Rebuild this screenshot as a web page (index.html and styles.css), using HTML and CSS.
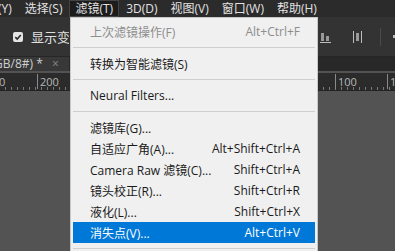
FILE: index.html
```html
<!DOCTYPE html>
<html lang="zh-CN">
<head>
    <meta charset="UTF-8">
    <title>滤镜菜单</title>
    <link rel="stylesheet" href="styles.css">
</head>
<body>
    <div class="app">
        <div class="menubar">
            <span class="menu-item first">(Y)</span>
            <span class="menu-item">选择(S)</span>
            <span class="menu-item active">滤镜(T)</span>
            <span class="menu-item">3D(D)</span>
            <span class="menu-item">视图(V)</span>
            <span class="menu-item">窗口(W)</span>
            <span class="menu-item">帮助(H)</span>
        </div>

        <div class="options">
            <label class="check">
                <span class="box">
                    <svg width="8" height="8" viewBox="0 0 8 8"><path d="M1.3 4.2 L3.2 6 L6.8 2" fill="none" stroke="#2a2a2a" stroke-width="1.6"/></svg>
                </span>
                <span class="check-text">显示变换控件</span>
            </label>
            <div class="align-tools">
                <svg width="14" height="14" viewBox="0 0 14 14">
                    <rect x="2" y="3" width="3" height="8" fill="#9a9a9a"/>
                    <rect x="7" y="6" width="3" height="5" fill="#9a9a9a"/>
                    <rect x="1" y="12" width="11" height="1" fill="#bdbdbd"/>
                </svg>
                <svg width="14" height="14" viewBox="0 0 14 14">
                    <rect x="2" y="1" width="1" height="12" fill="#bdbdbd"/>
                    <rect x="5" y="3" width="3" height="8" fill="#9a9a9a"/>
                    <rect x="10" y="1" width="1" height="12" fill="#bdbdbd"/>
                </svg>
                <span class="vsep"></span>
                <span class="dot"></span>
            </div>
        </div>

        <div class="tabs">
            <div class="tab">GB/8#) * <span class="close">×</span></div>
        </div>

        <div class="ruler">
            <span class="ruler-num" style="left: -4px">0</span>
            <span class="ruler-num" style="left: 37px">200</span>
            <span class="ruler-num" style="left: 335px">100</span>
            <span class="ruler-num" style="left: 387px">1</span>
        </div>

        <div class="canvas"></div>
    </div>

    <div class="dropdown">
        <div class="dd-item disabled"><span>上次滤镜操作(F)</span><span class="key">Alt+Ctrl+F</span></div>
        <div class="dd-sep"></div>
        <div class="dd-item"><span>转换为智能滤镜(S)</span></div>
        <div class="dd-sep"></div>
        <div class="dd-item"><span>Neural Filters...</span></div>
        <div class="dd-sep"></div>
        <div class="dd-item"><span>滤镜库(G)...</span></div>
        <div class="dd-item"><span>自适应广角(A)...</span><span class="key">Alt+Shift+Ctrl+A</span></div>
        <div class="dd-item"><span>Camera Raw 滤镜(C)...</span><span class="key">Shift+Ctrl+A</span></div>
        <div class="dd-item"><span>镜头校正(R)...</span><span class="key">Shift+Ctrl+R</span></div>
        <div class="dd-item"><span>液化(L)...</span><span class="key">Shift+Ctrl+X</span></div>
        <div class="dd-item selected"><span>消失点(V)...</span><span class="key">Alt+Ctrl+V</span></div>
        <div class="dd-sep"></div>
    </div>
</body>
</html>
```

FILE: styles.css
```css
/* General Styles */
body {
    margin: 0;
    padding: 0;
    width: 395px;
    height: 251px;
    overflow: hidden;
    font-family: "Segoe UI", "Open Sans", "Noto Sans CJK SC", sans-serif;
    font-size: 12px;
    background-color: #535353;
    position: relative;
}

.app {
    display: flex;
    flex-direction: column;
    height: 100%;
}

/* Menu bar */
.menubar {
    height: 17px;
    background: #2b2b2b;
    color: #e2e2e2;
    display: flex;
    align-items: center;
    gap: 1px;
    white-space: nowrap;
}

.menu-item {
    padding: 0 6px;
    line-height: 17px;
}

.menu-item.first {
    margin-left: -8px;
}

.menu-item.active {
    background: #1c1c1c;
    box-shadow: inset 0 0 0 1px #444444;
}

/* Options bar */
.options {
    height: 39px;
    background: #333333;
    border-bottom: 1px solid #262626;
    display: flex;
    align-items: center;
    padding-left: 13px;
    color: #e0e0e0;
}

.check {
    display: flex;
    align-items: center;
    gap: 8px;
    font-size: 13px;
    white-space: nowrap;
}

.check-text {
    width: 38px;
    overflow: hidden;
}

.box {
    width: 10px;
    height: 10px;
    background: #e4e4e4;
    border-radius: 2px;
    display: flex;
    align-items: center;
    justify-content: center;
}

.align-tools {
    margin-left: auto;
    display: flex;
    align-items: center;
}

.align-tools svg + svg {
    margin-left: 18px;
}

.vsep {
    width: 1px;
    height: 18px;
    background: #4a4a4a;
    margin-left: 15px;
}

.dot {
    width: 3px;
    height: 3px;
    background: #bbbbbb;
    margin-left: 12px;
    margin-right: -1px;
}

/* Document tabs */
.tabs {
    height: 14px;
    background: #282828;
    display: flex;
}

.tab {
    background: #383838;
    color: #cfcfcf;
    padding: 0 10px 0 0;
    margin-left: -6px;
    line-height: 14px;
    font-size: 12px;
    white-space: nowrap;
}

.close {
    color: #8a8a8a;
    margin-left: 6px;
}

/* Ruler */
.ruler {
    height: 17px;
    margin-top: 2px;
    position: relative;
    background-color: #2b2b2b;
    background-image:
        repeating-linear-gradient(90deg, transparent 0 5px, #7a7a7a 5px 6px);
    background-size: 100% 3px;
    background-position: 0 100%;
    background-repeat: no-repeat;
    border-bottom: 1px solid #232323;
}

.ruler-num {
    position: absolute;
    top: 1px;
    color: #b8b8b8;
    font-size: 11px;
    padding-left: 2px;
    border-left: 1px solid #8a8a8a;
    line-height: 15px;
}

.canvas {
    flex: 1;
    background: #535353;
}

/* Filter dropdown */
.dropdown {
    position: absolute;
    top: 17px;
    left: 70px;
    width: 246px;
    padding-top: 3px;
    background: #f0f0f0;
    border: 1px solid #c8c8c8;
    color: #1a1a1a;
}

.dd-item {
    height: 21px;
    margin: 0 2px;
    padding: 0 15px 0 17px;
    display: flex;
    align-items: center;
    justify-content: space-between;
    white-space: nowrap;
}

.dd-item.disabled {
    color: #8d8d8d;
}

.dd-item.selected {
    background: #0078d7;
    color: #ffffff;
}

.dd-sep {
    height: 1px;
    background: #cfcfcf;
    margin: 5px 2px 5px 2px;
}
```
